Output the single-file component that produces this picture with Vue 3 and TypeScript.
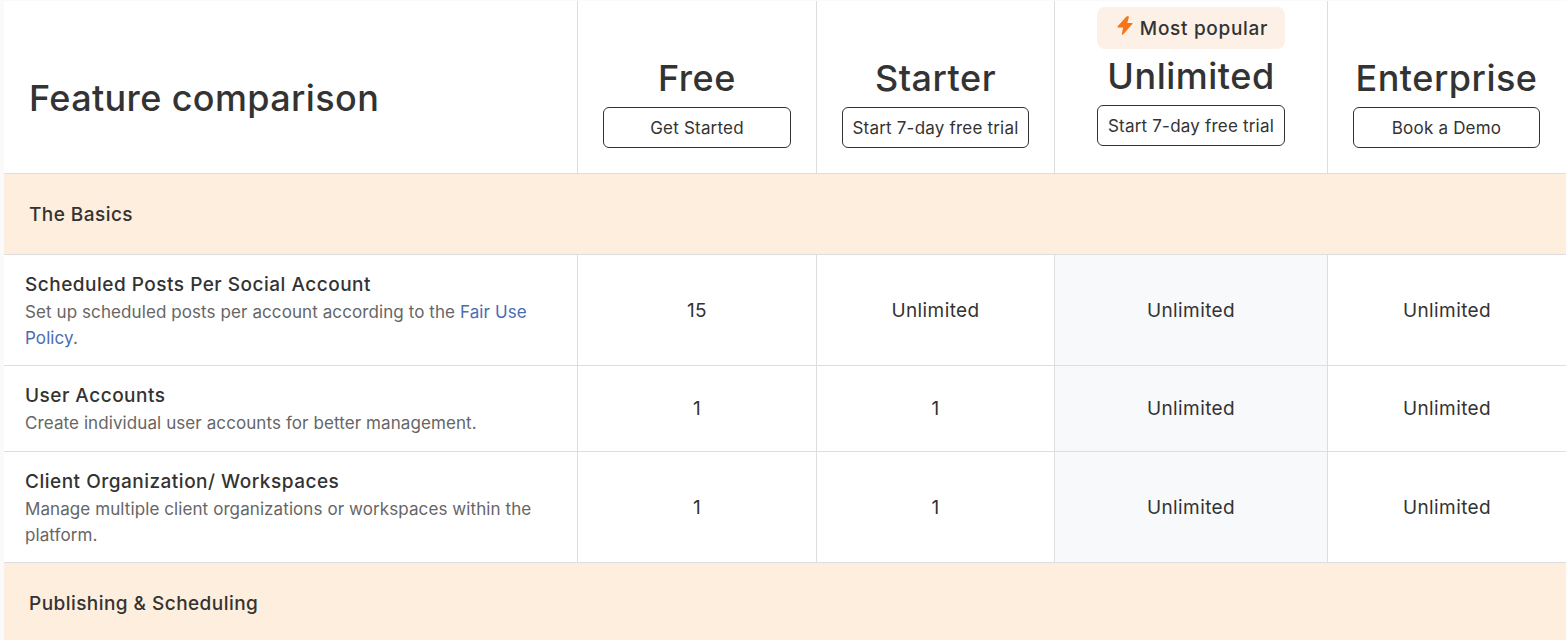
<script setup lang="ts">
interface Plan { name: string; cta: string; popular?: boolean; narrow?: boolean }
interface Row { title: string; desc?: string; link?: string; tail?: string; values: string[]; cls: string }

const plans: Plan[] = [
  { name: 'Free', cta: 'Get Started' },
  { name: 'Starter', cta: 'Start 7-day free trial', narrow: true },
  { name: 'Unlimited', cta: 'Start 7-day free trial', popular: true },
  { name: 'Enterprise', cta: 'Book a Demo', narrow: true },
]
const rows: Row[] = [
  { title: 'Scheduled Posts Per Social Account', desc: 'Set up scheduled posts per account according to the ', link: 'Fair Use Policy', tail: '.', values: ['15', 'Unlimited', 'Unlimited', 'Unlimited'], cls: 'tall' },
  { title: 'User Accounts', desc: 'Create individual user accounts for better management.', values: ['1', '1', 'Unlimited', 'Unlimited'], cls: 'short' },
  { title: 'Client Organization/ Workspaces', desc: 'Manage multiple client organizations or workspaces within the platform.', values: ['1', '1', 'Unlimited', 'Unlimited'], cls: 'tall' },
]
</script>

<template>
  <div class="page">
    <div class="row head">
      <div class="cell first"><h2 class="title">Feature comparison</h2></div>
      <div v-for="p in plans" :key="p.name" class="cell plan" :class="{ popular: p.popular }">
        <div v-if="p.popular" class="badge">
          <svg class="bolt" viewBox="0 0 16 19" width="16" height="19"><path d="M10 1 L1.2 10.8 H7 L5.6 18 L14.8 7.6 H9.4 L11.2 1 Z" fill="#f97316" stroke="#f97316" stroke-width="1.4" stroke-linejoin="round" /></svg>
          <span>Most popular</span>
        </div>
        <div class="name">{{ p.name }}</div>
        <button class="cta" :class="{ narrow: p.narrow }">{{ p.cta }}</button>
      </div>
    </div>

    <div class="section first-section">The Basics</div>

    <div v-for="r in rows" :key="r.title" class="row" :class="r.cls">
      <div class="cell feature">
        <div class="ftitle">{{ r.title }}</div>
        <div class="fdesc">{{ r.desc }}<a v-if="r.link" class="link">{{ r.link }}</a>{{ r.tail }}</div>
      </div>
      <div v-for="(v, i) in r.values" :key="i" class="cell value" :class="{ hl: i === 2 }">{{ v }}</div>
    </div>

    <div class="section last-section">Publishing &amp; Scheduling</div>
  </div>
</template>

<style>
html, body { margin: 0; background: #fafafa; overflow: hidden; }
</style>

<style scoped>
.page {
  width: 1562px;
  height: 640px;
  margin-left: 4px;
  overflow: hidden;
  font-family: "Inter", "Noto Sans", sans-serif;
  color: #333;
  background: #fff;
  border-top: 1px solid #fafafa;
  box-sizing: border-box;
}
.row {
  display: grid;
  grid-template-columns: 574px 239px 238px 273px 238px;
  border-bottom: 1px solid #dedede;
  box-sizing: border-box;
}
.head { height: 173px; }
.tall { height: 111px; }
.short { height: 86px; }
.cell {
  border-right: 1px solid #dedede;
  box-sizing: border-box;
}
.cell:last-child { border-right: 0; }
.first {
  display: flex;
  align-items: center;
  padding: 22px 0 0 25px;
}
.title {
  margin: 0;
  font-size: 36px;
  font-weight: 500;
  letter-spacing: 0.37px;
}
.plan {
  display: flex;
  flex-direction: column;
  align-items: center;
  justify-content: flex-end;
  padding-bottom: 25px;
}
.plan:last-child { padding-right: 1px; }
.plan.popular { padding-bottom: 27px; }
.badge {
  display: flex;
  align-items: center;
  justify-content: center;
  gap: 7px;
  width: 188px;
  height: 42px;
  padding-left: 3px;
  box-sizing: border-box;
  margin-bottom: 3px;
  background: #fdf0e6;
  border-radius: 8px;
  font-size: 19px;
  font-weight: 500;
  letter-spacing: 0.7px;
}
.bolt { margin-top: -6px; }
.name {
  font-size: 36px;
  font-weight: 500;
  line-height: 48px;
  letter-spacing: 0.5px;
  margin-bottom: 5px;
}
.cta {
  width: 188px;
  height: 41px;
  padding: 0;
  background: #fff;
  border: 1px solid #333;
  border-radius: 6px;
  font-family: inherit;
  font-size: 17px;
  letter-spacing: 0.2px;
  color: #333;
}
.cta.narrow { width: 187px; }
.section {
  background: #feeedd;
  display: flex;
  align-items: center;
  padding-left: 25px;
  font-size: 19px;
  font-weight: 500;
  letter-spacing: 0.45px;
  border-bottom: 1px solid #dedede;
  box-sizing: border-box;
}
.first-section { height: 81px; }
.last-section { height: 78px; padding-top: 2px; border-bottom: 0; }
.feature {
  padding: 16px 40px 0 21px;
}
.ftitle {
  font-size: 19px;
  font-weight: 500;
  line-height: 27px;
  letter-spacing: 0.5px;
}
.fdesc {
  font-size: 17px;
  line-height: 26px;
  letter-spacing: 0.09px;
  color: #666;
  margin-top: 1px;
}
.link { color: #4a6cb3; }
.value {
  display: flex;
  align-items: center;
  justify-content: center;
  font-size: 19px;
  letter-spacing: 0.4px;
}
.hl { background: #f8f9fb; }
</style>
